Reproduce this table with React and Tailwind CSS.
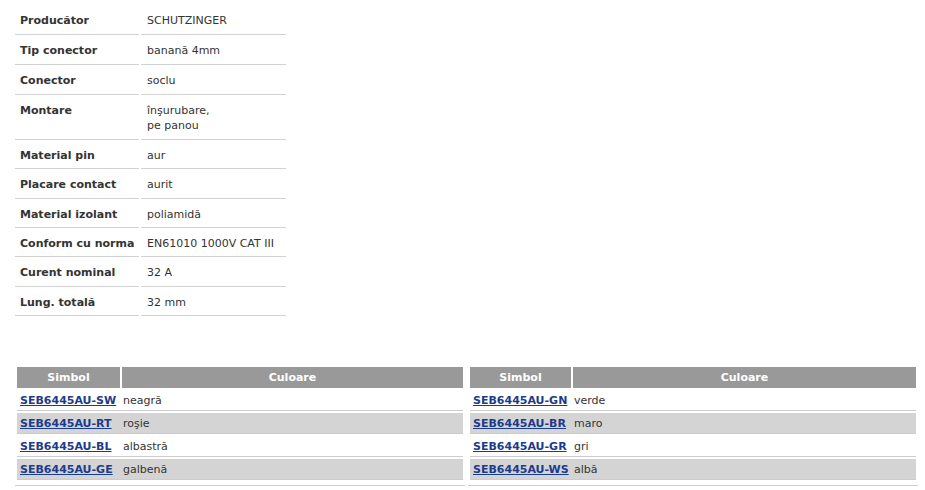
import React from 'react'

const specs = [
  { label: 'Producător', value: ['SCHUTZINGER'], h: 'h-[30px]' },
  { label: 'Tip conector', value: ['banană 4mm'], h: 'h-[30px]' },
  { label: 'Conector', value: ['soclu'], h: 'h-[30px]' },
  { label: 'Montare', value: ['înşurubare,', 'pe panou'], h: 'h-[45px]' },
  { label: 'Material pin', value: ['aur'], h: 'h-[29px]' },
  { label: 'Placare contact', value: ['aurit'], h: 'h-[30px]' },
  { label: 'Material izolant', value: ['poliamidă'], h: 'h-[29px]' },
  { label: 'Conform cu norma', value: ['EN61010 1000V CAT III'], h: 'h-[29px]' },
  { label: 'Curent nominal', value: ['32 A'], h: 'h-[30px]' },
  { label: 'Lung. totală', value: ['32 mm'], h: 'h-[29px]' }
]

const leftVariants = [
  { code: 'SEB6445AU-SW', color: 'neagră' },
  { code: 'SEB6445AU-RT', color: 'roşie' },
  { code: 'SEB6445AU-BL', color: 'albastră' },
  { code: 'SEB6445AU-GE', color: 'galbenă' }
]

const rightVariants = [
  { code: 'SEB6445AU-GN', color: 'verde' },
  { code: 'SEB6445AU-BR', color: 'maro' },
  { code: 'SEB6445AU-GR', color: 'gri' },
  { code: 'SEB6445AU-WS', color: 'albă' }
]

function VariantTable({ rows, codeWidth }) {
  return (
    <div className="w-[450px] px-[2px] pb-[5px] border-b border-[#cfcfcf]">
      {/* header */}
      <div className="flex gap-[2px] h-[21px] text-white font-bold">
        <div className={`${codeWidth} bg-[#999999] flex items-center justify-center`}>Simbol</div>
        <div className="flex-1 bg-[#999999] flex items-center justify-center">Culoare</div>
      </div>
      {rows.map((row, i) => (
        <div
          key={row.code}
          className={`flex gap-[2px] h-[21px] mt-[2px] border-b border-[#cccccc] items-center ${i % 2 === 1 ? 'bg-[#d4d4d4]' : 'bg-white'}`}
        >
          <div className={`${codeWidth} pl-[3px]`}>
            <a href="#" className="font-bold text-[#1c3b8c] underline">{row.code}</a>
          </div>
          <div className="flex-1 pl-[1px] text-[#333]">{row.color}</div>
        </div>
      ))}
    </div>
  )
}

export default function App() {
  return (
    <div className="w-[925px] min-h-[490px] bg-white font-['DejaVu_Sans','Verdana',sans-serif] text-[11px] leading-[15px] text-[#333]">
      {/* Specs */}
      <div className="ml-[15px] pt-[5px]">
        {specs.map((s) => (
          <div key={s.label} className={`flex gap-[2px] ${s.h}`}>
            <div className="w-[124px] border-b border-[#d2d2d2] pl-[5px] pt-[8px] font-bold text-[#333]">
              {s.label}
            </div>
            <div className="w-[145px] border-b border-[#d2d2d2] pl-[6px] pt-[8px] text-[#333]">
              {s.value.map((v) => (
                <div key={v}>{v}</div>
              ))}
            </div>
          </div>
        ))}
      </div>

      {/* Variants */}
      <div className="flex gap-[3px] ml-[15px] mt-[51px]">
        <VariantTable rows={leftVariants} codeWidth="w-[103px]" />
        <VariantTable rows={rightVariants} codeWidth="w-[101px]" />
      </div>
    </div>
  )
}
